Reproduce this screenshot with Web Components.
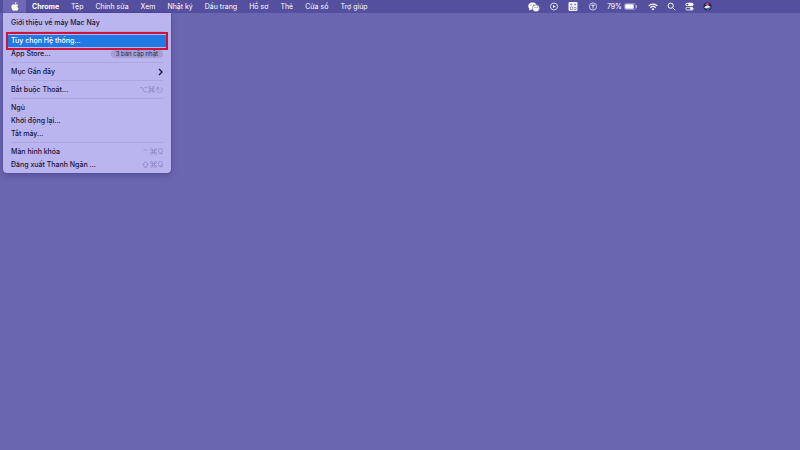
<!DOCTYPE html>
<html lang="vi">
<head>
<meta charset="utf-8">
<title>Màn hình nền</title>
<style>
html, body { height: 100%; margin: 0; }
body { background: #6b66b0; font: 7px/12px Inter, "Liberation Sans", sans-serif; color: #16133a; }
</style>
</head>
<body>
<desktop-screen>
  <menu-bar slot="bar">
    <bar-item current label="Apple"><svg width="8" height="9" viewBox="0 0 16 18" fill="#fff"><path d="M11 0c.2 1.800-1.200 4-3.300 4C7.400 2.200 9 .3 11 0zM8.300 5.200c.8 0 1.700-.9 3.200-.9 1.300 0 2.500.7 3.200 1.800-2.800 1.700-2.400 5.400.5 6.600C14.300 15.200 12.800 17.500 11.300 17.500c-1.200 0-1.600-.7-3-.7s-1.900.7-3 .7C3 17.500.8 13.700.8 10.200c0-3.600 2.200-5.700 4.500-5.700 1.300 0 2.200.7 3 .7z"/></svg></bar-item>
    <bar-item strong>Chrome</bar-item>
    <bar-item>Tệp</bar-item>
    <bar-item>Chỉnh sửa</bar-item>
    <bar-item>Xem</bar-item>
    <bar-item>Nhật ký</bar-item>
    <bar-item>Dấu trang</bar-item>
    <bar-item>Hồ sơ</bar-item>
    <bar-item>Thẻ</bar-item>
    <bar-item>Cửa sổ</bar-item>
    <bar-item>Trợ giúp</bar-item>
    <status-area slot="status"></status-area>
  </menu-bar>
  <drop-menu slot="menu">
    <menu-group><menu-row>Giới thiệu về máy Mac Này</menu-row></menu-group>
    <menu-group>
      <menu-row selected>Tùy chọn Hệ thống...</menu-row>
      <menu-row>App Store...<count-badge slot="end">3 bản cập nhật</count-badge></menu-row>
    </menu-group>
    <menu-group><menu-row>Mục Gần đây<svg slot="end" width="5" height="8" viewBox="0 0 5 8" fill="none" stroke="#16133a" stroke-width="1.300"><path d="M1 1l3 3-3 3"/></svg></menu-row></menu-group>
    <menu-group><menu-row>Bắt buộc Thoát...<key-hint slot="end" keys="option command escape"></key-hint></menu-row></menu-group>
    <menu-group>
      <menu-row>Ngủ</menu-row>
      <menu-row>Khởi động lại...</menu-row>
      <menu-row>Tắt máy...</menu-row>
    </menu-group>
    <menu-group>
      <menu-row>Màn hình khóa<key-hint slot="end" keys="control command q"></key-hint></menu-row>
      <menu-row>Đăng xuất Thanh Ngân ...<key-hint slot="end" keys="shift command q"></key-hint></menu-row>
    </menu-group>
  </drop-menu>
</desktop-screen>
<script>
const define = (name, markup, setup) => customElements.define(name, class extends HTMLElement {
  constructor() { super(); this.attachShadow({ mode: 'open' }); }
  connectedCallback() {
    this.shadowRoot.innerHTML = markup;
    if (setup) setup(this, this.shadowRoot);
  }
});
const reset = 'button{font:inherit;color:inherit;border:0;margin:0;padding:0;background:none;text-align:left}';

define('desktop-screen', `<style>
:host{display:block;min-height:100vh;background:#6b66b0;position:relative}
.menu{padding-left:3px;display:flex}
</style><slot name="bar"></slot><div class="menu"><slot name="menu"></slot></div>`);

define('menu-bar', `<style>
:host{display:flex;justify-content:space-between;height:13px;background:#544f9f;color:#fff;padding:0 88px 0 3px}
nav{display:flex}
</style><nav><slot></slot></nav><slot name="status"></slot>`);

define('bar-item', `<style>${reset}
:host{display:flex}
button{padding:0 6px;line-height:13px;white-space:nowrap;display:flex;align-items:center}
:host([strong]) button{font-weight:700}
:host([current]) button{width:23px;padding:0;justify-content:center;background:#6f69b5}
</style><button type="button"><slot></slot></button>`, (el, root) => {
  if (el.hasAttribute('label')) root.querySelector('button').setAttribute('aria-label', el.getAttribute('label'));
});

define('status-area', `<style>${reset}
:host{display:flex;align-items:center;gap:9px;color:#fff}
button{display:flex;align-items:center;gap:2px}
svg{display:block}
</style>
<button type="button" aria-label="WeChat"><svg width="12" height="10" viewBox="0 0 12 10"><ellipse cx="4.500" cy="4" rx="4.200" ry="3.600" fill="#fff"/><path d="M1.500 6L1 8.500l2.500-1z" fill="#fff"/><circle cx="8" cy="6.300" r="3.500" fill="#fff" stroke="#544f9f" stroke-width=".6"/><g fill="#544f9f"><circle cx="3" cy="3" r=".6"/><circle cx="5.800" cy="3" r=".6"/><circle cx="7" cy="5.600" r=".5"/><circle cx="9.200" cy="5.600" r=".5"/></g></svg></button>
<button type="button" aria-label="Phát"><svg width="10" height="9" viewBox="0 0 10 9"><circle cx="5" cy="4.500" r="3.500" fill="none" stroke="#e9e7fa" stroke-width=".9"/><path d="M4 3l2.600 1.500L4 6z" fill="#fff"/></svg></button>
<button type="button" aria-label="Bàn phím"><svg width="10" height="9" viewBox="0 0 10 9"><rect x=".5" width="9" height="9" rx="1" fill="#f2f0fc"/><path d="M2 2.500h2.500M6 2.500h2M3.300 1.500v2M7 1.500v2M2.500 5v2.500h2.300V5zM6 5.500h2v2H6" fill="none" stroke="#544f9f" stroke-width=".5"/></svg></button>
<button type="button" aria-label="Bộ gõ"><svg width="11" height="9" viewBox="0 0 11 9"><circle cx="6" cy="4.500" r="3.600" fill="none" stroke="#e9e7fa" stroke-width=".8"/><path d="M4.300 3.200h3.400M6 3.200v3.500" stroke="#fff" stroke-width=".9"/></svg></button>
<button type="button"><span>79%</span><svg width="15" height="7" viewBox="0 0 15 7"><rect x=".5" y=".5" width="11" height="6" rx="1.500" fill="none" stroke="#aaa6d8" stroke-width=".7"/><rect x="1.200" y="1.200" width="8.500" height="4.600" rx=".8" fill="#fff"/><path d="M12.500 2.300v2.400" stroke="#c9c6ea" stroke-width=".9"/></svg></button>
<button type="button" aria-label="Wi-Fi"><svg width="10" height="8" viewBox="0 0 10 8" fill="none" stroke="#fff" stroke-width="1.200"><path d="M.6 2.900a6.300 6.300 0 0 1 8.800 0M2.300 4.700a3.900 3.900 0 0 1 5.400 0"/><path d="M3.600 6L5 7.600 6.400 6a2 2 0 0 0-2.800 0z" fill="#fff" stroke="none"/></svg></button>
<button type="button" aria-label="Tìm kiếm"><svg width="9" height="9" viewBox="0 0 9 9" fill="none" stroke="#fff" stroke-width="1"><circle cx="3.700" cy="3.700" r="2.600"/><path d="M5.700 5.700l2.500 2.500"/></svg></button>
<button type="button" aria-label="Trung tâm điều khiển"><svg width="9" height="9" viewBox="0 0 9 9"><rect x=".5" y=".8" width="8" height="3.300" rx="1.600" fill="#fff"/><circle cx="2.300" cy="2.450" r="1" fill="#544f9f"/><rect x=".9" y="5.300" width="7.200" height="2.700" rx="1.300" fill="none" stroke="#fff" stroke-width=".8"/><circle cx="6.500" cy="6.650" r="1.400" fill="#fff"/></svg></button>
<button type="button" aria-label="Siri"><svg width="9" height="9" viewBox="0 0 9 9"><circle cx="4.500" cy="4.500" r="4" fill="#25244f"/><path d="M2 2.200a3.500 3.500 0 0 1 4.500-.4L4.500 4z" fill="#b84f87"/><path d="M1.200 5.800C3 3 5.500 2.800 7.900 5.300 5.600 4.800 4.200 8 1.200 5.800z" fill="#dff6ff"/><path d="M4.300 7.600c1-.2 2-.8 3-2" stroke="#4fb8de" stroke-width=".9" fill="none"/></svg></button>`);

define('drop-menu', `<style>
:host{display:block;box-sizing:border-box;width:168px;padding:4px 3px 2px;background:#bab5ef;border-radius:0 0 4px 4px;box-shadow:0 0 1px #302c70,0 2px 6px #302c7066}
</style><slot></slot>`);

define('menu-group', `<style>
:host{display:flex;flex-direction:column;gap:1px}
:host(:not(:first-child))::before{content:"";height:1px;margin:2px 5px;background:#aca7e1}
</style><slot></slot>`);

define('menu-row', `<style>${reset}
:host{display:block;position:relative;font-weight:500}
button{width:100%;height:12px;padding:0 5px;display:flex;align-items:center;justify-content:space-between;line-height:12px;white-space:nowrap}
:host([selected]){z-index:1;color:#fff}
:host([selected]) button{background:#1f7be3}
:host([selected])::after{content:"";position:absolute;inset:-3px 0;border:2px solid #cf1237;pointer-events:none}
</style><button type="button"><span><slot></slot></span><slot name="end"></slot></button>`);

define('count-badge', `<style>
:host{display:block;font-size:6px;font-weight:400;line-height:8px;padding:0 5px;border-radius:4px;background:#a49fd5;color:#29264f}
</style><slot></slot>`);

const glyphs = {
  option: '<path d="M0 1.500h2l2.500 4.500H7M4.500 1.500H7"/>',
  command: '<path d="M2.500 2.500h2v2h-2zM2.500 2.500h-1a1 1 0 1 1 1-1zM4.500 2.500v-1a1 1 0 1 1 1 1zM4.500 4.500h1a1 1 0 1 1-1 1zM2.500 4.500v1a1 1 0 1 1-1-1z"/>',
  escape: '<path d="M2.200 1.300a2.700 2.700 0 1 0 2.600 0M3.500 3.800L1.500 1.500M1.500 3V1.500H3"/>',
  control: '<path d="M1.500 3L3.500 1l2 2"/>',
  shift: '<path d="M3.500.6l2.800 2.900H5v2.700H2V3.500H.7z"/>'
};
define('key-hint', `<style>
:host{display:flex;align-items:center;gap:1px;color:#8a85bd;font-weight:400}
svg{display:block;fill:none;stroke:currentColor;stroke-width:.7;padding-bottom:1px}
</style>`, (el, root) => {
  for (const key of el.getAttribute('keys').split(' ')) {
    root.innerHTML += glyphs[key]
      ? `<svg width="7" height="7" viewBox="0 0 7 7" aria-hidden="true">${glyphs[key]}</svg>`
      : `<span>${key.toUpperCase()}</span>`;
  }
});
</script>
</body>
</html>
